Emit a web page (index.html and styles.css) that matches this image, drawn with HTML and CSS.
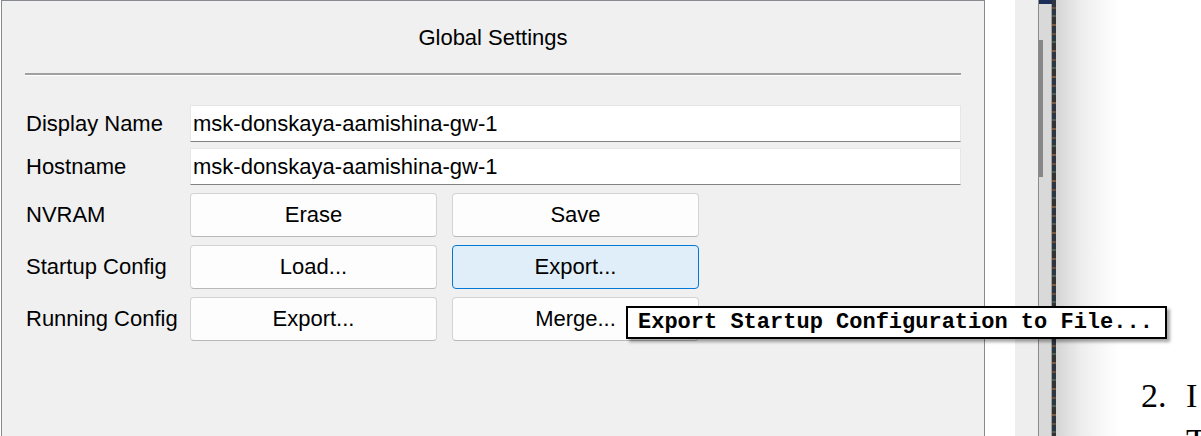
FILE: index.html
```html
<!DOCTYPE html>
<html>
<head>
<meta charset="utf-8">
<title>Global Settings</title>
<link rel="stylesheet" href="styles.css">
</head>
<body>
<div class="app">
  <section class="panel">
    <header class="panel-head"><h1 class="title">Global Settings</h1></header>
    <div class="sep"></div>
    <div class="form">
      <div class="row row-field">
        <span class="lbl">Display Name</span>
        <div class="field">msk-donskaya-aamishina-gw-1</div>
      </div>
      <div class="row row-field">
        <span class="lbl">Hostname</span>
        <div class="field">msk-donskaya-aamishina-gw-1</div>
      </div>
      <div class="row row-btn">
        <span class="lbl">NVRAM</span>
        <div class="btns"><button class="btn">Erase</button><button class="btn">Save</button></div>
      </div>
      <div class="row row-btn">
        <span class="lbl">Startup Config</span>
        <div class="btns"><button class="btn">Load...</button><button class="btn hot">Export...</button></div>
      </div>
      <div class="row row-btn">
        <span class="lbl">Running Config</span>
        <div class="btns"><button class="btn">Export...</button><button class="btn">Merge...</button></div>
      </div>
    </div>
  </section>
  <div class="gutter"></div>
  <div class="side"></div>
  <div class="scrollbar"><div class="scroll-cap"></div><div class="thumb"></div></div>
  <div class="edge"></div>
  <div class="doc">
    <div class="item"><span class="num">2.</span><span class="txt">I<br>T</span></div>
  </div>
</div>
<div class="tooltip">Export Startup Configuration to File...</div>
</body>
</html>
```

FILE: styles.css
```css
html, body {
  margin: 0;
  height: 100%;
  overflow: hidden;
}
body {
  background: #fff;
  font-family: "Liberation Sans", Arial, sans-serif;
  color: #000;
}
.app {
  display: flex;
  height: 436px;
  padding-left: 1px;
}
.panel {
  flex: none;
  box-sizing: border-box;
  width: 984px;
  height: 460px;
  border: 1px solid #878b90;
  border-bottom: none;
  background: #f0f0f0;
  padding: 0 23px;
}
.panel-head {
  height: 72px;
  display: flex;
  align-items: center;
  justify-content: center;
  padding-top: 2px;
  box-sizing: border-box;
}
.title {
  margin: 0;
  font-weight: normal;
  font-size: 22px;
  line-height: 26px;
}
.sep {
  height: 2px;
  background: #a0a0a0;
  border-bottom: 1px solid #fff;
}
.form {
  display: flex;
  flex-direction: column;
  padding-top: 29px;
}
.row {
  display: grid;
  grid-template-columns: 165px 1fr;
  align-items: center;
  font-size: 22px;
}
.row-field {
  height: 37px;
  margin-bottom: 6px;
}
.row-field + .row-field {
  margin-bottom: 8px;
}
.row-btn {
  height: 44px;
  margin-bottom: 8px;
}
.lbl {
  padding-left: 1px;
}
.field {
  box-sizing: border-box;
  height: 37px;
  background: #fff;
  border: 1px solid #e6e6e6;
  border-bottom-color: #828282;
  padding-left: 2px;
  line-height: 35px;
}
.btns {
  display: grid;
  grid-template-columns: 247px 247px;
  column-gap: 15px;
}
.btn {
  box-sizing: border-box;
  height: 44px;
  background: #fdfdfd;
  border: 1px solid #d3d3d3;
  border-bottom-color: #b8b8b8;
  border-radius: 4px;
  font-family: "Liberation Sans", Arial, sans-serif;
  font-size: 22px;
  color: #000;
  padding: 0;
}
.btn.hot {
  background: #e0eef9;
  border-color: #0078d4;
}
.gutter {
  flex: none;
  width: 30px;
  background: #fff;
}
.side {
  flex: none;
  width: 23px;
  background: #eeeeee;
}
.scrollbar {
  flex: none;
  position: relative;
  box-sizing: border-box;
  width: 14px;
  background: #d9d9d9;
  border-left: 1px solid #8a8a8a;
  border-right: 1px solid #a0a0a0;
}
.scroll-cap {
  position: absolute;
  top: 0;
  left: 0;
  right: -1px;
  height: 4px;
  background: #1c2e56;
}
.thumb {
  position: absolute;
  top: 40px;
  left: 0;
  width: 4px;
  height: 137px;
  background: #878787;
}
.edge {
  flex: none;
  width: 4px;
  background: repeating-linear-gradient(180deg, #2e3440 0 7px, #6a4c3c 7px 9px, #2a3844 9px 15px, #4d5b52 15px 17px, #333 17px 24px, #7a5a40 24px 26px);
}
.doc {
  flex: 1;
  overflow: hidden;
  background: linear-gradient(90deg, #d4d4d4 0, #ededed 25px, #fafafa 50px, #fff 65px);
  padding-top: 373px;
  padding-left: 85px;
}
.item {
  display: grid;
  grid-template-columns: 45px auto;
  font-family: "Liberation Serif", "Times New Roman", serif;
  font-size: 34px;
  line-height: 45px;
  white-space: nowrap;
}
.tooltip {
  position: absolute;
  left: 626px;
  top: 306px;
  box-sizing: border-box;
  width: 541px;
  height: 33px;
  border: 2px solid #000;
  background: #fff;
  box-shadow: 3px 3px 3px rgba(0, 0, 0, 0.35);
  font-family: "Liberation Mono", "Courier New", monospace;
  font-weight: bold;
  font-size: 22px;
  line-height: 29px;
  padding-left: 10px;
  white-space: nowrap;
}
```
